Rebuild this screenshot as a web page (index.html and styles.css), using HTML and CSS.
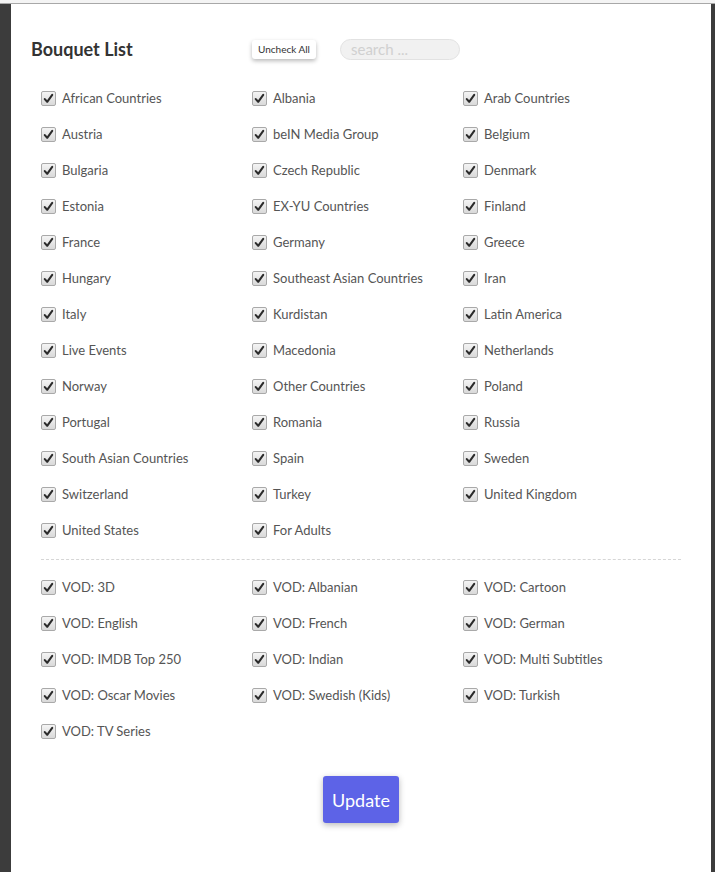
FILE: index.html
```html
<!DOCTYPE html>
<html>
<head>
<meta charset="utf-8">
<link rel="stylesheet" href="styles.css">
</head>
<body>
<div class="topbar"></div>
<div class="modal">
  <div class="header">
    <h2 class="title">Bouquet List</h2>
    <button class="uncheck">Uncheck All</button>
    <input class="search" type="text" placeholder="search ...">
  </div>
  <div class="grid">
    <label class="item"><span class="box"><svg viewBox="0 0 15 15"><path d="M3.2 8.2 L6 11.3 L11.8 3.4"/></svg></span>African Countries</label>
    <label class="item"><span class="box"><svg viewBox="0 0 15 15"><path d="M3.2 8.2 L6 11.3 L11.8 3.4"/></svg></span>Albania</label>
    <label class="item"><span class="box"><svg viewBox="0 0 15 15"><path d="M3.2 8.2 L6 11.3 L11.8 3.4"/></svg></span>Arab Countries</label>
    <label class="item"><span class="box"><svg viewBox="0 0 15 15"><path d="M3.2 8.2 L6 11.3 L11.8 3.4"/></svg></span>Austria</label>
    <label class="item"><span class="box"><svg viewBox="0 0 15 15"><path d="M3.2 8.2 L6 11.3 L11.8 3.4"/></svg></span>beIN Media Group</label>
    <label class="item"><span class="box"><svg viewBox="0 0 15 15"><path d="M3.2 8.2 L6 11.3 L11.8 3.4"/></svg></span>Belgium</label>
    <label class="item"><span class="box"><svg viewBox="0 0 15 15"><path d="M3.2 8.2 L6 11.3 L11.8 3.4"/></svg></span>Bulgaria</label>
    <label class="item"><span class="box"><svg viewBox="0 0 15 15"><path d="M3.2 8.2 L6 11.3 L11.8 3.4"/></svg></span>Czech Republic</label>
    <label class="item"><span class="box"><svg viewBox="0 0 15 15"><path d="M3.2 8.2 L6 11.3 L11.8 3.4"/></svg></span>Denmark</label>
    <label class="item"><span class="box"><svg viewBox="0 0 15 15"><path d="M3.2 8.2 L6 11.3 L11.8 3.4"/></svg></span>Estonia</label>
    <label class="item"><span class="box"><svg viewBox="0 0 15 15"><path d="M3.2 8.2 L6 11.3 L11.8 3.4"/></svg></span>EX-YU Countries</label>
    <label class="item"><span class="box"><svg viewBox="0 0 15 15"><path d="M3.2 8.2 L6 11.3 L11.8 3.4"/></svg></span>Finland</label>
    <label class="item"><span class="box"><svg viewBox="0 0 15 15"><path d="M3.2 8.2 L6 11.3 L11.8 3.4"/></svg></span>France</label>
    <label class="item"><span class="box"><svg viewBox="0 0 15 15"><path d="M3.2 8.2 L6 11.3 L11.8 3.4"/></svg></span>Germany</label>
    <label class="item"><span class="box"><svg viewBox="0 0 15 15"><path d="M3.2 8.2 L6 11.3 L11.8 3.4"/></svg></span>Greece</label>
    <label class="item"><span class="box"><svg viewBox="0 0 15 15"><path d="M3.2 8.2 L6 11.3 L11.8 3.4"/></svg></span>Hungary</label>
    <label class="item"><span class="box"><svg viewBox="0 0 15 15"><path d="M3.2 8.2 L6 11.3 L11.8 3.4"/></svg></span>Southeast Asian Countries</label>
    <label class="item"><span class="box"><svg viewBox="0 0 15 15"><path d="M3.2 8.2 L6 11.3 L11.8 3.4"/></svg></span>Iran</label>
    <label class="item"><span class="box"><svg viewBox="0 0 15 15"><path d="M3.2 8.2 L6 11.3 L11.8 3.4"/></svg></span>Italy</label>
    <label class="item"><span class="box"><svg viewBox="0 0 15 15"><path d="M3.2 8.2 L6 11.3 L11.8 3.4"/></svg></span>Kurdistan</label>
    <label class="item"><span class="box"><svg viewBox="0 0 15 15"><path d="M3.2 8.2 L6 11.3 L11.8 3.4"/></svg></span>Latin America</label>
    <label class="item"><span class="box"><svg viewBox="0 0 15 15"><path d="M3.2 8.2 L6 11.3 L11.8 3.4"/></svg></span>Live Events</label>
    <label class="item"><span class="box"><svg viewBox="0 0 15 15"><path d="M3.2 8.2 L6 11.3 L11.8 3.4"/></svg></span>Macedonia</label>
    <label class="item"><span class="box"><svg viewBox="0 0 15 15"><path d="M3.2 8.2 L6 11.3 L11.8 3.4"/></svg></span>Netherlands</label>
    <label class="item"><span class="box"><svg viewBox="0 0 15 15"><path d="M3.2 8.2 L6 11.3 L11.8 3.4"/></svg></span>Norway</label>
    <label class="item"><span class="box"><svg viewBox="0 0 15 15"><path d="M3.2 8.2 L6 11.3 L11.8 3.4"/></svg></span>Other Countries</label>
    <label class="item"><span class="box"><svg viewBox="0 0 15 15"><path d="M3.2 8.2 L6 11.3 L11.8 3.4"/></svg></span>Poland</label>
    <label class="item"><span class="box"><svg viewBox="0 0 15 15"><path d="M3.2 8.2 L6 11.3 L11.8 3.4"/></svg></span>Portugal</label>
    <label class="item"><span class="box"><svg viewBox="0 0 15 15"><path d="M3.2 8.2 L6 11.3 L11.8 3.4"/></svg></span>Romania</label>
    <label class="item"><span class="box"><svg viewBox="0 0 15 15"><path d="M3.2 8.2 L6 11.3 L11.8 3.4"/></svg></span>Russia</label>
    <label class="item"><span class="box"><svg viewBox="0 0 15 15"><path d="M3.2 8.2 L6 11.3 L11.8 3.4"/></svg></span>South Asian Countries</label>
    <label class="item"><span class="box"><svg viewBox="0 0 15 15"><path d="M3.2 8.2 L6 11.3 L11.8 3.4"/></svg></span>Spain</label>
    <label class="item"><span class="box"><svg viewBox="0 0 15 15"><path d="M3.2 8.2 L6 11.3 L11.8 3.4"/></svg></span>Sweden</label>
    <label class="item"><span class="box"><svg viewBox="0 0 15 15"><path d="M3.2 8.2 L6 11.3 L11.8 3.4"/></svg></span>Switzerland</label>
    <label class="item"><span class="box"><svg viewBox="0 0 15 15"><path d="M3.2 8.2 L6 11.3 L11.8 3.4"/></svg></span>Turkey</label>
    <label class="item"><span class="box"><svg viewBox="0 0 15 15"><path d="M3.2 8.2 L6 11.3 L11.8 3.4"/></svg></span>United Kingdom</label>
    <label class="item"><span class="box"><svg viewBox="0 0 15 15"><path d="M3.2 8.2 L6 11.3 L11.8 3.4"/></svg></span>United States</label>
    <label class="item"><span class="box"><svg viewBox="0 0 15 15"><path d="M3.2 8.2 L6 11.3 L11.8 3.4"/></svg></span>For Adults</label>
  </div>
  <div class="divider"></div>
  <div class="grid">
    <label class="item"><span class="box"><svg viewBox="0 0 15 15"><path d="M3.2 8.2 L6 11.3 L11.8 3.4"/></svg></span>VOD: 3D</label>
    <label class="item"><span class="box"><svg viewBox="0 0 15 15"><path d="M3.2 8.2 L6 11.3 L11.8 3.4"/></svg></span>VOD: Albanian</label>
    <label class="item"><span class="box"><svg viewBox="0 0 15 15"><path d="M3.2 8.2 L6 11.3 L11.8 3.4"/></svg></span>VOD: Cartoon</label>
    <label class="item"><span class="box"><svg viewBox="0 0 15 15"><path d="M3.2 8.2 L6 11.3 L11.8 3.4"/></svg></span>VOD: English</label>
    <label class="item"><span class="box"><svg viewBox="0 0 15 15"><path d="M3.2 8.2 L6 11.3 L11.8 3.4"/></svg></span>VOD: French</label>
    <label class="item"><span class="box"><svg viewBox="0 0 15 15"><path d="M3.2 8.2 L6 11.3 L11.8 3.4"/></svg></span>VOD: German</label>
    <label class="item"><span class="box"><svg viewBox="0 0 15 15"><path d="M3.2 8.2 L6 11.3 L11.8 3.4"/></svg></span>VOD: IMDB Top 250</label>
    <label class="item"><span class="box"><svg viewBox="0 0 15 15"><path d="M3.2 8.2 L6 11.3 L11.8 3.4"/></svg></span>VOD: Indian</label>
    <label class="item"><span class="box"><svg viewBox="0 0 15 15"><path d="M3.2 8.2 L6 11.3 L11.8 3.4"/></svg></span>VOD: Multi Subtitles</label>
    <label class="item"><span class="box"><svg viewBox="0 0 15 15"><path d="M3.2 8.2 L6 11.3 L11.8 3.4"/></svg></span>VOD: Oscar Movies</label>
    <label class="item"><span class="box"><svg viewBox="0 0 15 15"><path d="M3.2 8.2 L6 11.3 L11.8 3.4"/></svg></span>VOD: Swedish (Kids)</label>
    <label class="item"><span class="box"><svg viewBox="0 0 15 15"><path d="M3.2 8.2 L6 11.3 L11.8 3.4"/></svg></span>VOD: Turkish</label>
    <label class="item"><span class="box"><svg viewBox="0 0 15 15"><path d="M3.2 8.2 L6 11.3 L11.8 3.4"/></svg></span>VOD: TV Series</label>
  </div>
  <div class="actions">
    <button class="update">Update</button>
  </div>
</div>
</body>
</html>
```

FILE: styles.css
```css
html, body {
  margin: 0;
  padding: 0;
  height: 100%;
}
body {
  background: #3c3c3c;
  font-family: Lato, "Open Sans", sans-serif;
  display: flex;
  flex-direction: column;
  overflow: hidden;
}
.topbar {
  height: 3px;
  background: #f4f4f4;
  border-bottom: 1px solid #a8a8a8;
  flex: none;
}
.modal {
  flex: 1;
  background: #fff;
  margin: 0 4px 0 11px;
  padding: 30px 30px 0 30px;
}
.header {
  display: flex;
  align-items: center;
  height: 30px;
  margin-left: -10px;
}
.title {
  margin: 0;
  width: 221px;
  font-size: 18px;
  font-weight: 700;
  color: #333;
}
.uncheck {
  font-family: inherit;
  font-size: 10px;
  color: #333;
  background: #fff;
  border: none;
  border-radius: 3px;
  height: 19px;
  width: 64px;
  padding: 0;
  box-shadow: 0 2px 4px rgba(0,0,0,0.28);
}
.search {
  margin-left: 24px;
  width: 120px;
  height: 21px;
  box-sizing: border-box;
  border: 1px solid #e2e2e2;
  border-radius: 11px;
  background: #f1f1f1;
  padding: 0 10px;
  font-family: inherit;
  font-size: 15px;
  outline: none;
}
.search::placeholder {
  color: #d0d0d0;
}
.grid {
  display: grid;
  grid-template-columns: 211px 211px 1fr;
  grid-auto-rows: 36px;
}
.header + .grid {
  margin-top: 16px;
}
.item {
  display: flex;
  align-items: center;
  font-size: 13px;
  color: #555;
}
.box {
  width: 13px;
  height: 13px;
  border: 1px solid #a9a9a9;
  border-radius: 2px;
  background: linear-gradient(#f4f4f4, #d9d9d9);
  margin-right: 6px;
  display: flex;
  flex: none;
}
.box svg {
  width: 13px;
  height: 13px;
}
.box path {
  fill: none;
  stroke: #2b2b2b;
  stroke-width: 2.4;
  stroke-linecap: round;
  stroke-linejoin: round;
}
.divider {
  border-top: 1px dashed #d6d6d6;
  margin: 11px 0 9px;
}
.actions {
  display: flex;
  justify-content: center;
  margin-top: 27px;
}
.update {
  width: 76px;
  height: 47px;
  border: none;
  border-radius: 3px;
  background: #5d63e7;
  color: #fff;
  font-family: inherit;
  font-size: 18px;
  box-shadow: 0 2px 6px rgba(0,0,0,0.28);
}
```
